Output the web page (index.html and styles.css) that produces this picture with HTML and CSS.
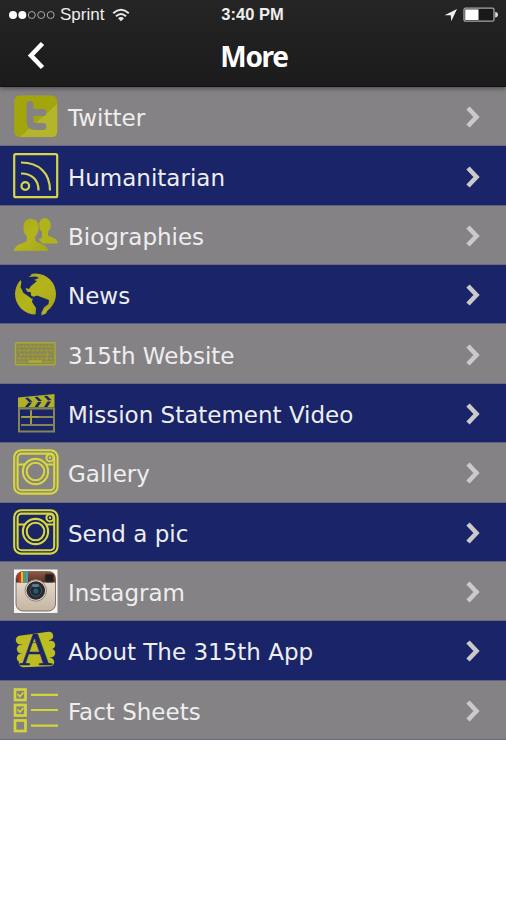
FILE: index.html
```html
<!DOCTYPE html>
<html lang="en">
<head>
  <meta charset="UTF-8" />
  <meta name="viewport" content="width=device-width, initial-scale=1.0"/>
  <title>More</title>
  <link rel="stylesheet" href="styles.css">
</head>
<body>
  <svg class="defs" width="0" height="0">
    <defs>
      <linearGradient id="gold" x1="0" y1="0" x2="1" y2="1">
        <stop offset="0" stop-color="#a6a817"/>
        <stop offset="0.5" stop-color="#b4b51c"/>
        <stop offset="1" stop-color="#a4a51a"/>
      </linearGradient>
      <linearGradient id="leather" x1="0" y1="0" x2="0" y2="1">
        <stop offset="0" stop-color="#8a5b45"/>
        <stop offset="1" stop-color="#5c2f22"/>
      </linearGradient>
      <linearGradient id="cream" x1="0" y1="0" x2="0" y2="1">
        <stop offset="0" stop-color="#eee6da"/>
        <stop offset="1" stop-color="#c5b4a1"/>
      </linearGradient>
      <symbol id="chevron" viewBox="0 0 14 22">
        <path d="M2 2L10.500 11L2 20" fill="none" stroke="currentColor" stroke-width="4.600"/>
      </symbol>
      <symbol id="camera" viewBox="0 0 46 46">
        <g fill="none" stroke="#d8d83a" stroke-width="2.100">
          <rect x="1.200" y="1.200" width="43.400" height="43.400" rx="7"/>
          <rect x="4.600" y="4.600" width="36.600" height="36.600" rx="4"/>
          <path d="M4 15.500H12M33 15.500H42"/>
          <circle cx="22.500" cy="22.500" r="12.600"/>
          <circle cx="22.500" cy="22.500" r="8.800"/>
          <circle cx="37" cy="8.800" r="3.600"/>
        </g>
        <circle cx="37" cy="8.800" r="1.200" fill="#d8d83a"/>
      </symbol>
    </defs>
  </svg>

  <header class="header">
    <div class="status">
      <div class="carrier">
        <svg width="48" height="10" viewBox="0 0 48 10">
          <g fill="#fff">
            <circle cx="5" cy="5" r="4"/>
            <circle cx="14.300" cy="5" r="4"/>
          </g>
          <g fill="none" stroke="#aaa" stroke-width="1">
            <circle cx="23.800" cy="5" r="3.500"/>
            <circle cx="33.200" cy="5" r="3.500"/>
            <circle cx="42.700" cy="5" r="3.500"/>
          </g>
        </svg>
        <span class="carrier-name">Sprint</span>
        <svg width="18" height="14" viewBox="0 0 18 14">
          <g fill="none" stroke="#e8e8e8" stroke-width="2">
            <path d="M1.200 5.200Q9 -1.600 16.800 5.200"/>
            <path d="M4 8.300Q9 3.600 14 8.300"/>
          </g>
          <path d="M6 10.200Q9 7.800 12 10.200L9 13.200Z" fill="#e8e8e8"/>
        </svg>
      </div>
      <span class="time">3:40 PM</span>
      <div class="battery">
        <svg width="14" height="14" viewBox="0 0 14 14"><path d="M13 1L0.500 7.200H6.700L7.300 13.200Z" fill="#eee"/></svg>
        <svg width="36" height="16" viewBox="0 0 36 16">
          <rect x="1" y="1.200" width="30" height="13" rx="1.500" fill="#191919" stroke="#a5a5a5" stroke-width="1.300"/>
          <rect x="2.200" y="2.400" width="13.300" height="10.600" fill="#fff"/>
          <path d="M32.200 5Q35 5.300 35 7.700T32.200 10.400Z" fill="#ddd"/>
        </svg>
      </div>
    </div>
    <div class="nav">
      <svg class="back" width="18" height="30" viewBox="0 0 18 30"><path d="M15.500 2.500L4 14.500L15.500 26.500" fill="none" stroke="#fff" stroke-width="4.600"/></svg>
      <h1>More</h1>
    </div>
  </header>

  <ul class="menu">
    <li>
      <svg class="icon" viewBox="0 0 46 46">
        <rect x="1.200" y="2.500" width="43" height="41.500" rx="5.500" fill="#a2a50b"/>
        <path d="M44.200 11V38.500Q44.200 44 38.700 44H7L44.200 11Z" fill="#b5b52a"/>
        <path d="M17 11.500V28Q17 33.500 22.500 33.500H30M17 19.500H30" fill="none" stroke="#858285" stroke-width="7" stroke-linecap="round" stroke-linejoin="round"/>
      </svg>
      <span>Twitter</span>
      <svg class="arrow"><use href="#chevron"/></svg>
    </li>
    <li>
      <svg class="icon" viewBox="0 0 46 46">
        <g fill="none" stroke="#d6d64e" stroke-width="2.200">
          <rect x="1.200" y="1.200" width="43" height="43" rx="1.500"/>
          <circle cx="12.300" cy="33" r="3.800"/>
          <path d="M8 20.500C19 20.500 25.500 27 25.500 37.500"/>
          <path d="M8 9.500C26 9.500 37 20 37 37.500"/>
        </g>
      </svg>
      <span>Humanitarian</span>
      <svg class="arrow"><use href="#chevron"/></svg>
    </li>
    <li>
      <svg class="icon" viewBox="0 0 46 46">
        <g fill="#b1b31a">
          <ellipse cx="31.800" cy="13.300" rx="6" ry="7.300"/>
          <path d="M29 18H35V23.500C38 25.500 44.500 26 45 31.500H29.500L25.500 27.500Q29 26.500 29 23.500Z"/>
        </g>
        <g fill="url(#gold)" stroke="#858285" stroke-width="0.800">
          <path d="M18 6.500C23 6.500 26 10 26 15C26 20 24.500 22.500 22.500 24.500V28.500C25 31.500 35 31.500 35.500 39.300H0.500C1 31.500 11 31.500 13.500 28.500V24.500C11.500 22.500 10 20 10 15C10 10 13 6.500 18 6.500Z"/>
        </g>
      </svg>
      <span>Biographies</span>
      <svg class="arrow"><use href="#chevron"/></svg>
    </li>
    <li>
      <svg class="icon" viewBox="0 0 46 46">
        <circle cx="22.500" cy="23" r="20.500" fill="url(#gold)"/>
        <path d="M7 8L17 1L18.500 4L15.500 6L23 5.500L26 7L21 9L24 10L18 15L16 18L12.500 17L14 20.500L18 21.500V24.500L21 26L19 28L15 25L10.500 22L7.500 16L8.500 11Z" fill="#192469"/>
        <path d="M20 26L24 24.500L28 26L36 29L35.500 33L31 36.500L27 44.500L22.500 44.500L23 37L19 31Z" fill="#192469"/>
        <path d="M28 44.500L31 39L35.500 37L33 42.500Z" fill="#b4b51c"/>
      </svg>
      <span>News</span>
      <svg class="arrow"><use href="#chevron"/></svg>
    </li>
    <li>
      <svg class="icon" viewBox="0 0 46 46">
        <rect x="2.500" y="11.800" width="39.500" height="22" rx="0.800" fill="#8b894f" stroke="#aaa934" stroke-width="1.400"/>
        <g fill="none" stroke="#a19f38" stroke-width="1.500">
          <path d="M5 15.500H40M7 23.500H38" stroke-dasharray="2.500 1.300"/>
          <path d="M5 19.500H40M5 27.500H40" stroke-dasharray="3 1.500"/>
          <path d="M5 31H14M30 31H40" stroke-dasharray="3 1"/>
          <path d="M15.500 30.500H29" stroke="#b0af2a" stroke-width="2.500"/>
          <path d="M34 21V32" stroke-width="1"/>
        </g>
      </svg>
      <span>315th Website</span>
      <svg class="arrow"><use href="#chevron"/></svg>
    </li>
    <li>
      <svg class="icon" viewBox="0 0 46 46">
        <path d="M5 7.500L41.500 4V17.500H5Z" fill="#b0b127"/>
        <g fill="#192469">
          <path d="M12 8L15 7.700L19.500 11.800L16 12ZM21.500 7L24.500 6.700L29 11L25.500 11.300ZM31 6L34 5.700L38.500 10L35 10.500Z"/>
          <path d="M15.500 12.500H19L15.500 17H12ZM25 12H28.500L25 17H21.500ZM34.500 11.500H38L34.500 17H31Z"/>
        </g>
        <g fill="none" stroke="#868556" stroke-width="2">
          <path d="M6 17V41.500H41V18.500H6M8 27H40M8 35H40M18 20V35"/>
        </g>
        <path d="M9 26.800H26M18 21V34" fill="none" stroke="#aaa437" stroke-width="1.400"/>
      </svg>
      <span>Mission Statement Video</span>
      <svg class="arrow"><use href="#chevron"/></svg>
    </li>
    <li>
      <svg class="icon"><use href="#camera"/></svg>
      <span>Gallery</span>
      <svg class="arrow"><use href="#chevron"/></svg>
    </li>
    <li>
      <svg class="icon"><use href="#camera"/></svg>
      <span>Send a pic</span>
      <svg class="arrow"><use href="#chevron"/></svg>
    </li>
    <li>
      <svg class="icon" viewBox="0 0 46 46">
        <rect x="1" y="1.500" width="43.500" height="43.500" fill="#f6f4f2"/>
        <rect x="3" y="3.500" width="39.500" height="39.500" rx="7" fill="url(#cream)" stroke="#65594f" stroke-width="0.800"/>
        <path d="M3 14.500V10.500Q3 3.500 10 3.500H35.500Q42.500 3.500 42.500 10.500V14.500Z" fill="url(#leather)"/>
        <path d="M5.500 5.500L8 4V14.500H5.500Z" fill="#c9362b"/>
        <path d="M8 4H10.300V14.500H8Z" fill="#e3b935"/>
        <path d="M10.300 3.500H12.600V14.500H10.300Z" fill="#58a34a"/>
        <path d="M12.600 3.500H15V14.500H12.600Z" fill="#459bd0"/>
        <rect x="32" y="6" width="8.500" height="8" rx="1.500" fill="#1e1d20" stroke="#503127"/>
        <circle cx="22.800" cy="22.500" r="10.700" fill="#ddd5cb" stroke="#958579"/>
        <circle cx="22.800" cy="22.500" r="9.300" fill="#292b2f"/>
        <circle cx="22.800" cy="22.500" r="5.800" fill="#172c3c" stroke="#49535b"/>
        <circle cx="22.800" cy="23" r="2.500" fill="#315870"/>
        <ellipse cx="22.500" cy="17.500" rx="3.800" ry="1.700" fill="#667985"/>
      </svg>
      <span>Instagram</span>
      <svg class="arrow"><use href="#chevron"/></svg>
    </li>
    <li>
      <svg class="icon" viewBox="0 0 46 46">
        <g fill="none" stroke="#bbbd23" stroke-width="8.500" stroke-linecap="round" stroke-linejoin="round">
          <path d="M7 13L36 9M8 22L38 18M8 31L38 26M10 36L37 35"/>
          <path d="M14 14V34M31 12V34" stroke-width="10"/>
        </g>
        <text x="22.500" y="38" text-anchor="middle" class="letter">A</text>
      </svg>
      <span>About The 315th App</span>
      <svg class="arrow"><use href="#chevron"/></svg>
    </li>
    <li>
      <svg class="icon" viewBox="0 0 46 46">
        <g fill="none" stroke="#d3d438" stroke-width="2.700">
          <rect x="2" y="2.500" width="10.500" height="10.500"/>
          <rect x="2" y="18" width="10.500" height="10.500"/>
          <rect x="2" y="33.500" width="10.500" height="10.500"/>
          <path d="M18 7.800H45M18 23H45M18 38.700H45" stroke-width="2.200"/>
          <path d="M4.500 7L6.800 9.500L10.500 5.500M4.500 22.500L6.800 25L10.500 21" stroke-width="1.800"/>
        </g>
      </svg>
      <span>Fact Sheets</span>
      <svg class="arrow"><use href="#chevron"/></svg>
    </li>
  </ul>
</body>
</html>
```
FILE: styles.css
```css
* {
  box-sizing: border-box;
}
body {
  margin: 0;
  background-color: #fff;
  color: #eee;
  font-family: Verdana, "DejaVu Sans", sans-serif;
  overflow: hidden;
}
.defs {
  display: block;
}
.header {
  height: 87px;
  background: linear-gradient(#252525, #1b1b1b);
  border-bottom: 1px solid #111;
  box-shadow: 0 1px 5px rgba(0,0,0,0.5);
  position: relative;
}
.status {
  height: 29px;
  display: grid;
  grid-template-columns: 1fr auto 1fr;
  align-items: center;
  padding: 0 7px 0 8px;
  font-family: "Liberation Sans", Arial, sans-serif;
  font-size: 17px;
}
.carrier {
  display: flex;
  align-items: center;
}
.carrier-name {
  margin: 0 8px 0 4px;
}
.time {
  font-size: 16.5px;
  font-weight: bold;
  margin-left: -2px;
}
.battery {
  display: flex;
  justify-content: flex-end;
  align-items: center;
  gap: 5px;
}
.nav {
  height: 54px;
  display: grid;
  grid-template-columns: 60px 1fr 58px;
  align-items: center;
}
.back {
  margin-left: 27px;
}
h1 {
  margin: 0;
  text-align: center;
  font-family: "Noto Sans", sans-serif;
  font-size: 28px;
  font-weight: bold;
  letter-spacing: -1.3px;
  color: #fff;
}
.menu {
  list-style: none;
  margin: 0;
  padding: 0;
}
.menu li {
  height: 59.36px;
  display: flex;
  align-items: center;
  padding: 0 26px 0 13px;
  background-color: #858285;
  border-bottom: 1px solid #6c6b80;
  font-size: 23px;
}
.menu li:nth-child(even) {
  background-color: #192469;
  border-bottom-color: #5c617f;
}
.menu span {
  flex: 1;
  margin-left: 9px;
  padding-top: 4px;
  white-space: nowrap;
}
.icon {
  width: 46px;
  height: 46px;
  overflow: visible;
}
.arrow {
  width: 14px;
  height: 22px;
  margin-top: 2px;
  color: #cbcacb;
}
.letter {
  font-family: "Liberation Serif", serif;
  font-size: 46px;
  fill: #192469;
  stroke: #192469;
  stroke-width: 0.6px;
}
```
